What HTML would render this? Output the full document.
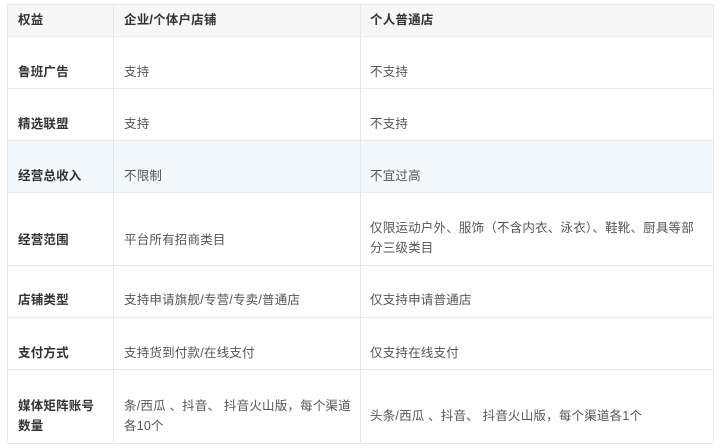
<!DOCTYPE html>
<html><head><meta charset="utf-8"><style>
body{margin:0;width:720px;height:448px;background:#fff;font-family:"Liberation Sans","Noto Sans CJK SC",sans-serif;font-size:12.5px;letter-spacing:0.2px;color:#555;position:relative;overflow:hidden}
.r{position:absolute;left:7px;width:706px;border-top:1px solid #e8e8e8}
.v{position:absolute;top:4px;height:438px;border-left:1px solid #e8e8e8}
.t{position:absolute;white-space:nowrap;line-height:20px}
.b{font-weight:bold;color:#333}
</style></head><body>
<div class="r" style="top:4px;height:32px;background:#f7f7f7"></div>
<div class="r" style="top:36px;height:52px"></div>
<div class="r" style="top:88px;height:52px"></div>
<div class="r" style="top:140px;height:52px;background:#f2f8fc"></div>
<div class="r" style="top:192px;height:73px"></div>
<div class="r" style="top:265px;height:52px"></div>
<div class="r" style="top:317px;height:52px"></div>
<div class="r" style="top:369px;height:73px;border-bottom:1px solid #e8e8e8"></div>
<div class="v" style="left:7px"></div>
<div class="v" style="left:113px"></div>
<div class="v" style="left:360px"></div>
<div class="v" style="left:713px"></div>

<div class="t b" style="left:18px;top:10px">权益</div>
<div class="t b" style="left:124px;top:10px">企业/个体户店铺</div>
<div class="t b" style="left:370px;top:10px">个人普通店</div>

<div class="t b" style="left:18px;top:62px">鲁班广告</div>
<div class="t" style="left:124px;top:62px">支持</div>
<div class="t" style="left:370px;top:62px">不支持</div>

<div class="t b" style="left:18px;top:114px">精选联盟</div>
<div class="t" style="left:124px;top:114px">支持</div>
<div class="t" style="left:370px;top:114px">不支持</div>

<div class="t b" style="left:18px;top:166px">经营总收入</div>
<div class="t" style="left:124px;top:166px">不限制</div>
<div class="t" style="left:370px;top:166px">不宜过高</div>

<div class="t b" style="left:18px;top:230px">经营范围</div>
<div class="t" style="left:124px;top:230px">平台所有招商类目</div>
<div class="t" style="left:370px;top:218px">仅限运动户外、服饰（不含内衣、泳衣）、鞋靴、厨具等部<br>分三级类目</div>

<div class="t b" style="left:18px;top:290px">店铺类型</div>
<div class="t" style="left:124px;top:290px">支持申请旗舰/专营/专卖/普通店</div>
<div class="t" style="left:370px;top:290px">仅支持申请普通店</div>

<div class="t b" style="left:18px;top:343px">支付方式</div>
<div class="t" style="left:124px;top:343px">支持货到付款/在线支付</div>
<div class="t" style="left:370px;top:343px">仅支持在线支付</div>

<div class="t b" style="left:18px;top:396px">媒体矩阵账号<br>数量</div>
<div class="t" style="left:124px;top:396px">条/西瓜 、抖音、 抖音火山版，每个渠道<br>各10个</div>
<div class="t" style="left:370px;top:406px">头条/西瓜 、抖音、 抖音火山版，每个渠道各1个</div>
</body></html>
